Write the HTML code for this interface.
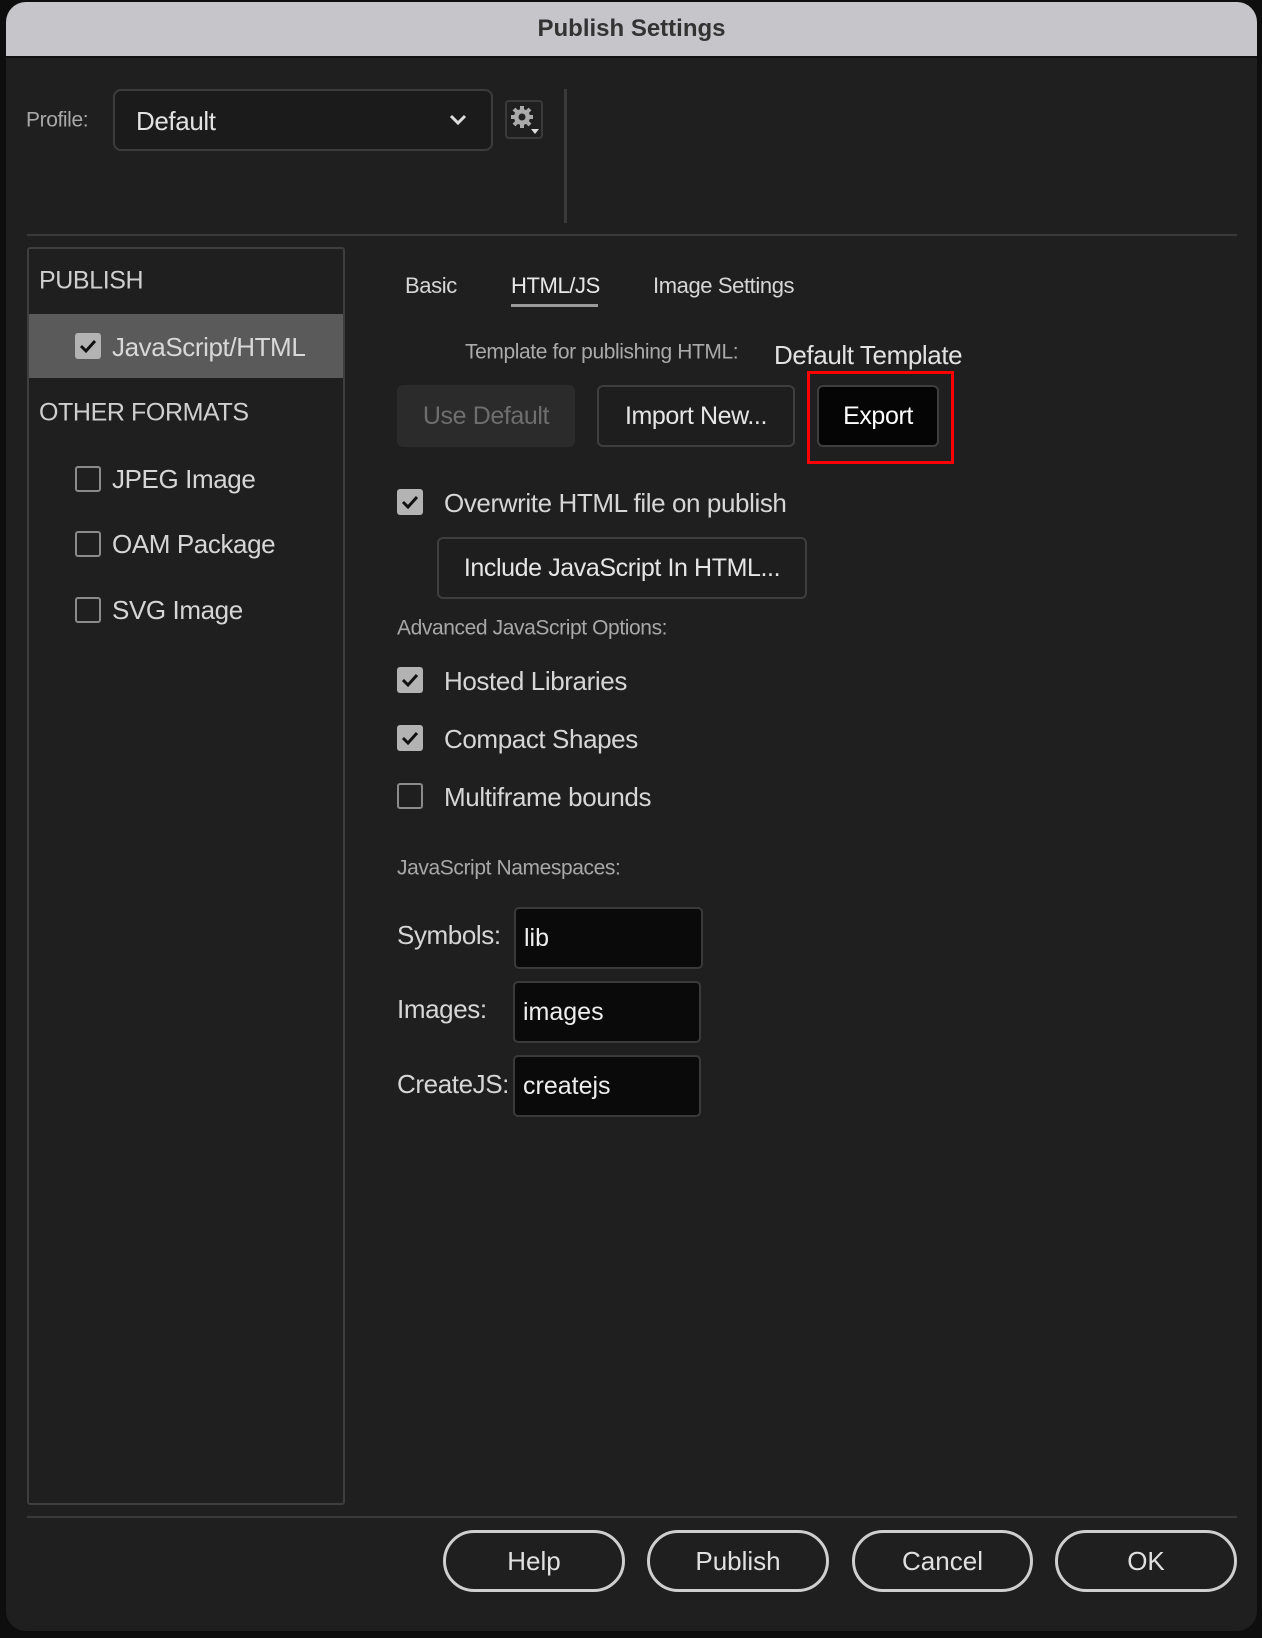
<!DOCTYPE html>
<html><head><meta charset="utf-8"><style>
*{margin:0;padding:0;box-sizing:border-box}
body{width:1262px;height:1638px;background:#0e0e0e;position:relative;overflow:hidden;font-family:"Liberation Sans",sans-serif;color:#d6d6d6}
.a{position:absolute;white-space:nowrap}
.dlg{position:absolute;left:6px;top:2px;width:1251px;height:1629px;background:#1f1f1f;border-radius:20px;overflow:hidden}
.title{position:absolute;left:0;top:0;width:100%;height:56px;background:#c6c5c9;border-bottom:2px solid #111;text-align:center;font-weight:bold;font-size:24px;color:#333;line-height:54px}
.t{font-size:24px;letter-spacing:-0.4px;line-height:1;transform:translateY(-50%)}
.cb{position:absolute;width:26px;height:26px;border-radius:3px;background:#b3b3b3}
.cb svg{position:absolute;left:3px;top:3px}
.ub{position:absolute;width:26px;height:26px;border-radius:3px;border:2px solid #8a8a8a}
.btn{position:absolute;border:2px solid #3e3e3e;border-radius:6px;background:#1e1e1e;display:flex;align-items:center;justify-content:center;font-size:25px;color:#e6e6e6;letter-spacing:-0.4px}
.pill{position:absolute;top:1530px;height:62px;border:3px solid #cfcfcf;border-radius:31px;display:flex;align-items:center;justify-content:center;font-size:26px;color:#e0e0e0}
.inp{position:absolute;background:#0a0a0a;border:2px solid #3a3a3a;border-radius:5px;font-size:25px;color:#eee;padding-left:8px;display:flex;align-items:center}
</style></head><body>
<div class="dlg">
<div class="title">Publish Settings</div>
</div>
<div class="a t" style="left:26px;top:120px;color:#a8a8a8;font-size:21px">Profile:</div>
<div class="a" style="left:113px;top:89px;width:380px;height:62px;border:2px solid #3c3c3c;border-radius:8px;background:#1b1b1b"></div>
<div class="a t" style="left:136px;top:121px;font-size:26px;color:#e2e2e2">Default</div>
<svg class="a" style="left:448px;top:113px" width="20" height="14"><path d="M3 3l7 7 7-7" stroke="#ddd" stroke-width="3" fill="none"/></svg>
<div class="a" style="left:505px;top:100px;width:38px;height:39px;border:2px solid #3a3a3a;border-radius:4px"></div>
<svg class="a" style="left:509px;top:104px" width="32" height="32"><circle cx="13" cy="13" r="8" fill="#aaa"/><g stroke="#aaa" stroke-width="4"><path d="M13 2v22M2 13h22M5 5l16 16M21 5L5 21"/></g><circle cx="13" cy="13" r="3.5" fill="#222"/><path d="M22 25h8l-4 5z" fill="#ddd"/></svg>
<div class="a" style="left:564px;top:89px;width:3px;height:134px;background:#3a3a3a"></div>
<div class="a" style="left:27px;top:234px;width:1210px;height:2px;background:#3a3a3a"></div>
<div class="a" style="left:27px;top:247px;width:318px;height:1258px;border:2px solid #3e3e3e;border-radius:3px"></div>
<div class="a t" style="left:39px;top:281px;font-size:25px;color:#cfcfcf">PUBLISH</div>
<div class="a" style="left:29px;top:314px;width:314px;height:64px;background:#5a5a5a"></div>
<div class="cb" style="left:75px;top:333px"><svg width="20" height="20"><path d="M3 10l5 5 9-10" stroke="#111" stroke-width="3" fill="none"/></svg></div>
<div class="a t" style="left:112px;top:347px;font-size:26px;color:#d8d8d8">JavaScript/HTML</div>
<div class="a t" style="left:39px;top:413px;font-size:25px;color:#cfcfcf">OTHER FORMATS</div>
<div class="ub" style="left:75px;top:466px"></div><div class="a t" style="left:112px;top:479px;font-size:26px">JPEG Image</div>
<div class="ub" style="left:75px;top:531px"></div><div class="a t" style="left:112px;top:544px;font-size:26px">OAM Package</div>
<div class="ub" style="left:75px;top:597px"></div><div class="a t" style="left:112px;top:610px;font-size:26px">SVG Image</div>

<div class="a t" style="left:405px;top:286px;font-size:22px">Basic</div>
<div class="a t" style="left:511px;top:286px;font-size:22px;color:#e8e8e8">HTML/JS</div>
<div class="a" style="left:511px;top:304px;width:87px;height:3px;background:#9a9a9a"></div>
<div class="a t" style="left:653px;top:286px;font-size:22px">Image Settings</div>
<div class="a t" style="left:465px;top:352px;font-size:21px;color:#aaa">Template for publishing HTML:</div>
<div class="a t" style="left:774px;top:355px;font-size:26px;color:#e2e2e2">Default Template</div>
<div class="btn" style="left:397px;top:385px;width:178px;height:62px;background:#2b2b2b;border-color:#2b2b2b;color:#6e6e6e">Use Default</div>
<div class="btn" style="left:597px;top:385px;width:198px;height:62px">Import New...</div>
<div class="btn" style="left:817px;top:385px;width:122px;height:62px;background:#050505;color:#fff">Export</div>
<div class="a" style="left:807px;top:371px;width:147px;height:93px;border:3px solid #f00"></div>
<div class="cb" style="left:397px;top:489px"><svg width="20" height="20"><path d="M3 10l5 5 9-10" stroke="#111" stroke-width="3" fill="none"/></svg></div>
<div class="a t" style="left:444px;top:503px;font-size:26px">Overwrite HTML file on publish</div>
<div class="btn" style="left:437px;top:537px;width:370px;height:62px">Include JavaScript In HTML...</div>
<div class="a t" style="left:397px;top:628px;font-size:21px;color:#a8a8a8">Advanced JavaScript Options:</div>
<div class="cb" style="left:397px;top:667px"><svg width="20" height="20"><path d="M3 10l5 5 9-10" stroke="#111" stroke-width="3" fill="none"/></svg></div>
<div class="a t" style="left:444px;top:681px;font-size:26px">Hosted Libraries</div>
<div class="cb" style="left:397px;top:725px"><svg width="20" height="20"><path d="M3 10l5 5 9-10" stroke="#111" stroke-width="3" fill="none"/></svg></div>
<div class="a t" style="left:444px;top:739px;font-size:26px">Compact Shapes</div>
<div class="ub" style="left:397px;top:783px"></div>
<div class="a t" style="left:444px;top:797px;font-size:26px">Multiframe bounds</div>
<div class="a t" style="left:397px;top:868px;font-size:21px;color:#a8a8a8">JavaScript Namespaces:</div>
<div class="a t" style="left:397px;top:935px;font-size:26px">Symbols:</div>
<div class="inp" style="left:514px;top:907px;width:189px;height:62px">lib</div>
<div class="a t" style="left:397px;top:1009px;font-size:26px">Images:</div>
<div class="inp" style="left:513px;top:981px;width:188px;height:62px">images</div>
<div class="a t" style="left:397px;top:1084px;font-size:26px">CreateJS:</div>
<div class="inp" style="left:513px;top:1055px;width:188px;height:62px">createjs</div>
<div class="a" style="left:27px;top:1516px;width:1210px;height:2px;background:#3a3a3a"></div>
<div class="pill" style="left:443px;width:182px">Help</div>
<div class="pill" style="left:647px;width:182px">Publish</div>
<div class="pill" style="left:852px;width:181px">Cancel</div>
<div class="pill" style="left:1055px;width:182px">OK</div>
</body></html>
